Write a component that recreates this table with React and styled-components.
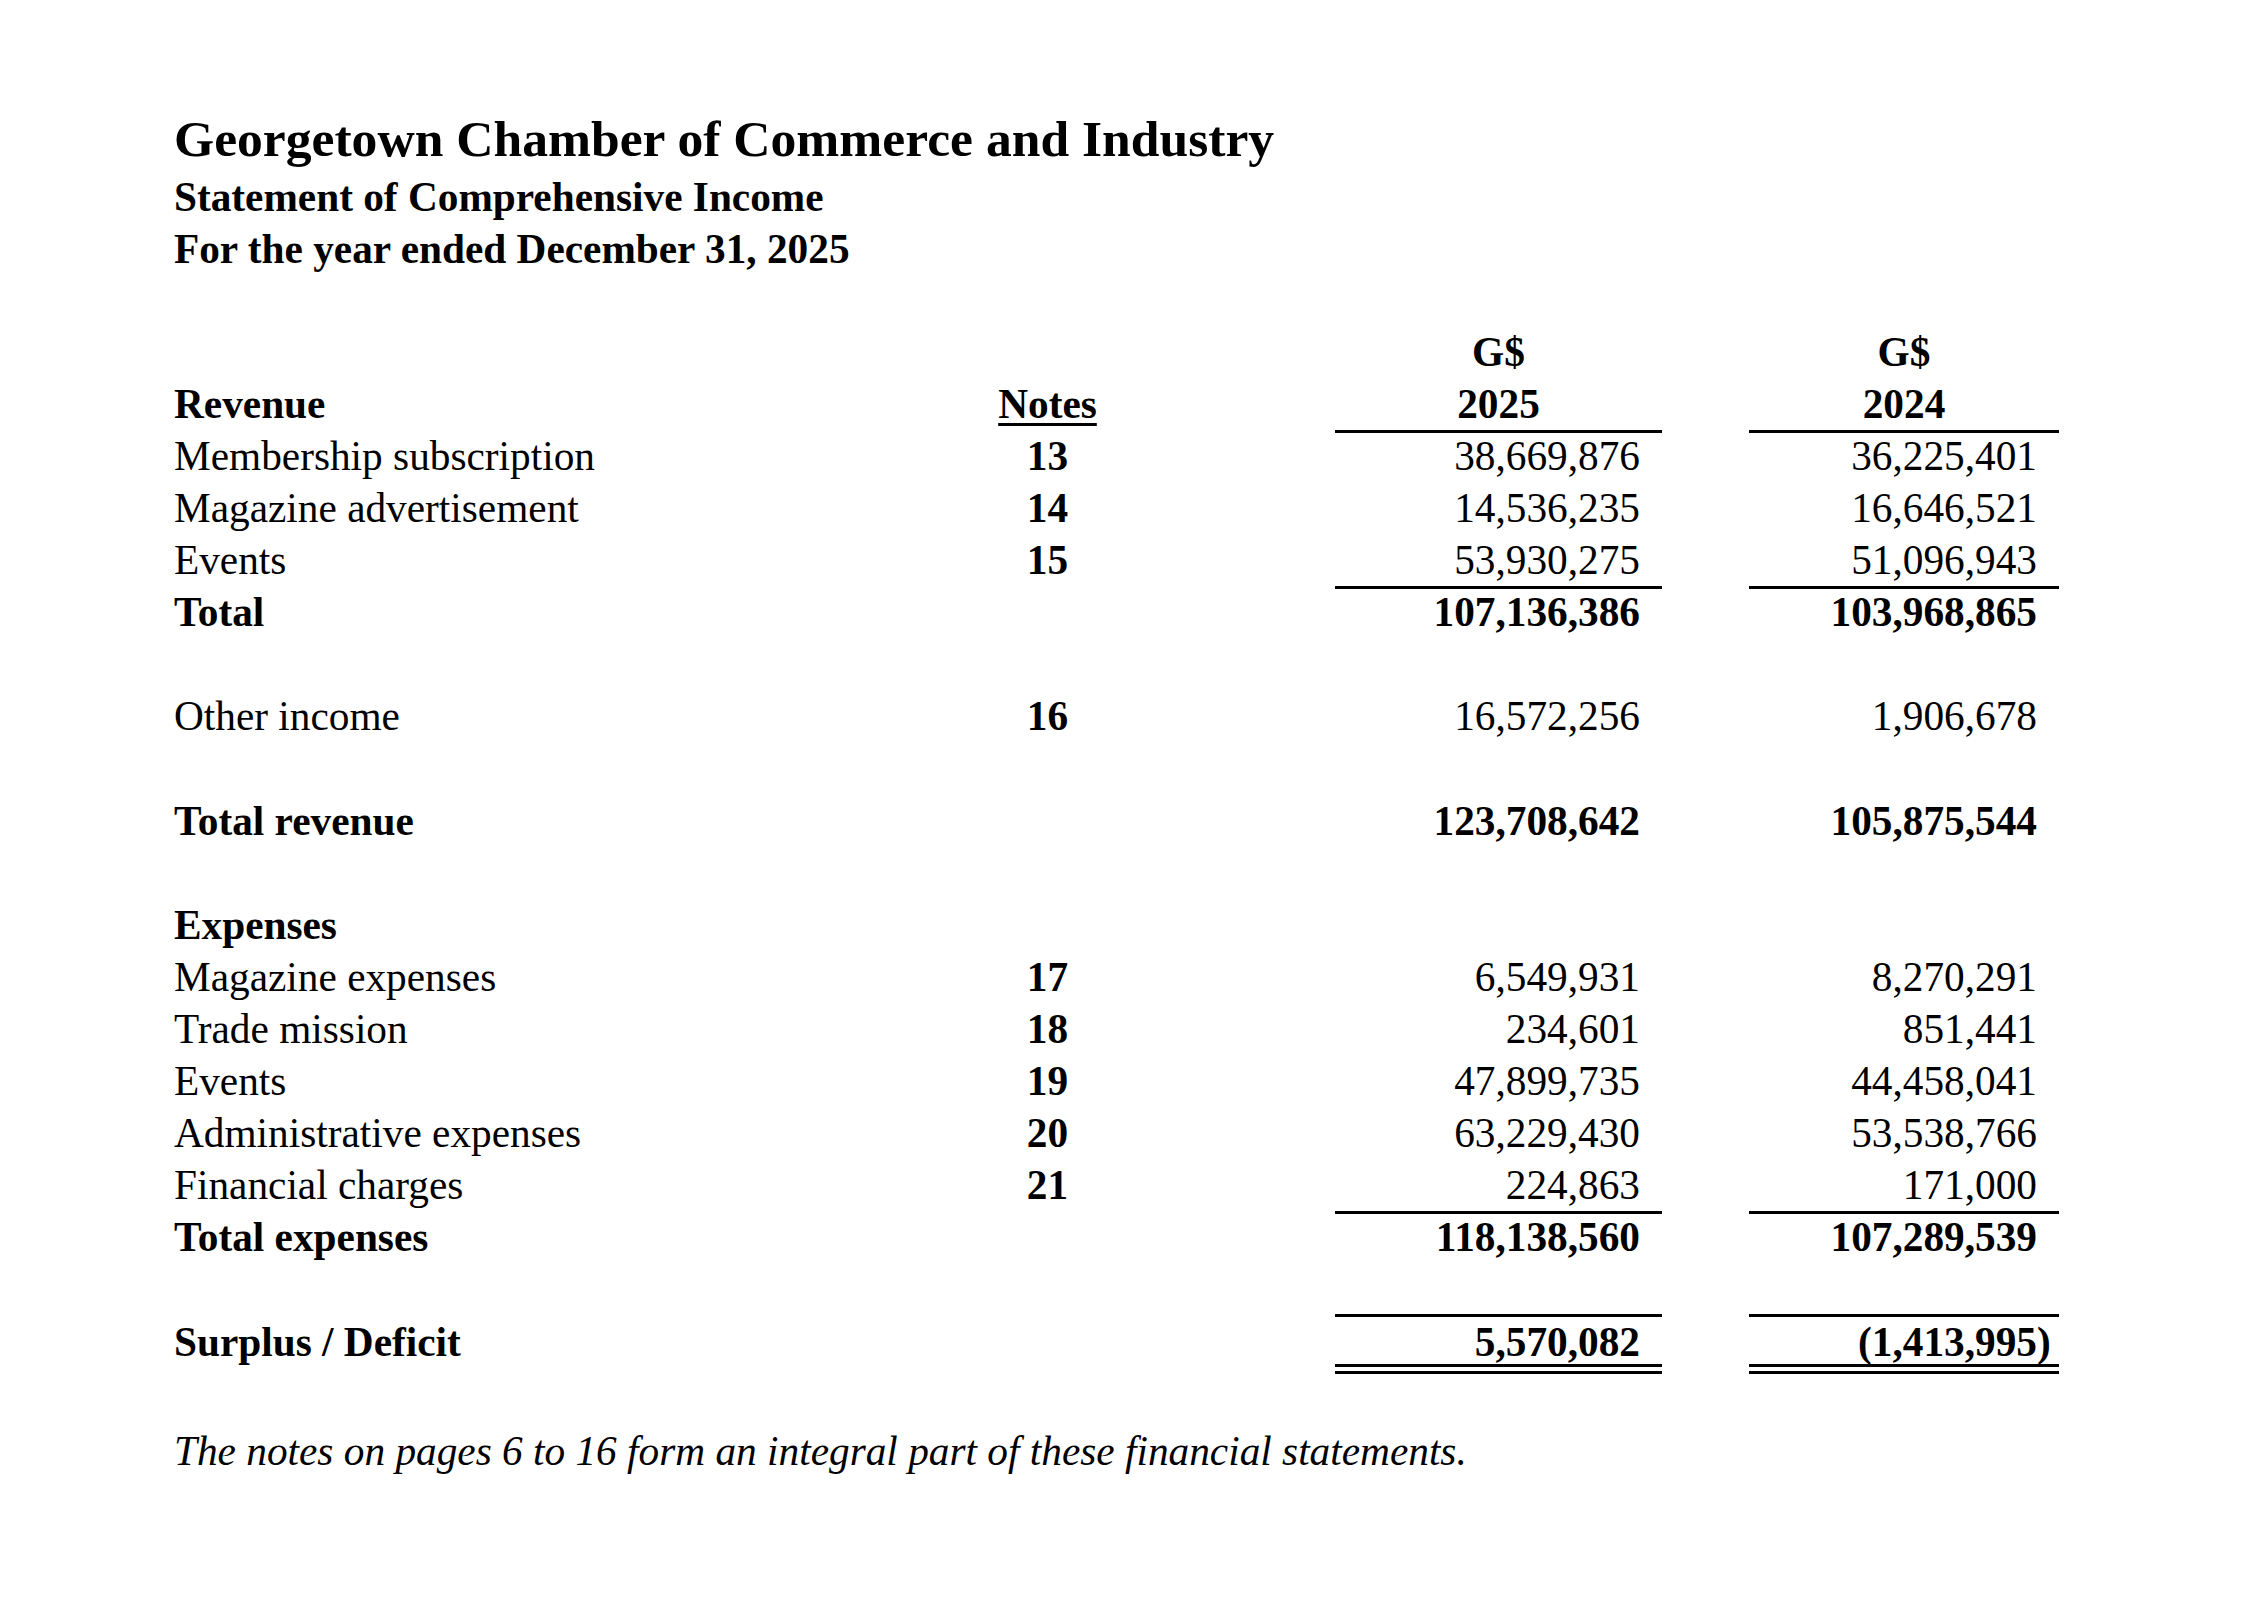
import React from "react";
import styled, { createGlobalStyle } from "styled-components";

const GlobalStyle = createGlobalStyle`
  html, body {
    margin: 0;
    padding: 0;
    background: #ffffff;
  }
  body {
    font-family: "Liberation Serif", "Times New Roman", serif;
    color: #000000;
  }
`;

const Page = styled.div`
  width: 2268px;
  min-height: 1610px;
  box-sizing: border-box;
  padding: 106.5px 0 0 174px;
  background: #ffffff;
`;

const Heading = styled.div`
  font-weight: bold;
  font-size: ${({ $main }) => ($main ? "51.6px" : "41.3px")};
  line-height: ${({ $main }) => ($main ? "64px" : "52px")};
  white-space: nowrap;
`;

const Table = styled.div`
  margin-top: 51.5px;
  width: 1885px;
  font-size: 41.3px;
`;

const Row = styled.div`
  display: grid;
  grid-template-columns: 806px 135px 220px 327px 87px 310px;
  grid-template-areas: "label note . cur . prior";
  height: 52.07px;
  line-height: 52.07px;
  white-space: nowrap;
`;

const SurplusRow = styled(Row)`
  margin-top: 50.5px;
  height: 60px;
  line-height: 42px;

  & > * {
    box-sizing: border-box;
    padding-top: 4px;
    border-top: 3px solid transparent;
  }
`;

const Label = styled.div`
  grid-area: label;
  font-weight: ${({ $bold }) => ($bold ? "bold" : "normal")};
`;

const Note = styled.div`
  grid-area: note;
  text-align: center;
  font-weight: bold;
`;

const NotesHead = styled.span`
  text-decoration: underline;
  text-decoration-thickness: 3px;
  text-underline-offset: 5px;
`;

const Amount = styled.div`
  grid-area: ${({ $prior }) => ($prior ? "prior" : "cur")};
  box-sizing: border-box;
  text-align: ${({ $center }) => ($center ? "center" : "right")};
  padding-right: ${({ $center }) => ($center ? "0" : "22px")};
  font-weight: ${({ $bold }) => ($bold ? "bold" : "normal")};
  border-bottom: ${({ $rule }) => ($rule ? "3px solid #000" : "none")};
`;

const SurplusAmount = styled(Amount)`
  && {
    border-top: 3px solid #000;
    border-bottom: 10px double #000;
  }
`;

const Paren = styled.span`
  margin-right: -0.333em;
`;

const Footnote = styled.p`
  margin: 51px 0 0;
  font-size: 41.3px;
  font-style: italic;
  line-height: 52px;
  white-space: nowrap;
`;

const revenue = [
  { label: "Membership subscription", note: "13", cur: "38,669,876", prior: "36,225,401" },
  { label: "Magazine advertisement", note: "14", cur: "14,536,235", prior: "16,646,521" },
  { label: "Events", note: "15", cur: "53,930,275", prior: "51,096,943", rule: true },
];

const expenses = [
  { label: "Magazine expenses", note: "17", cur: "6,549,931", prior: "8,270,291" },
  { label: "Trade mission", note: "18", cur: "234,601", prior: "851,441" },
  { label: "Events", note: "19", cur: "47,899,735", prior: "44,458,041" },
  { label: "Administrative expenses", note: "20", cur: "63,229,430", prior: "53,538,766" },
  { label: "Financial charges", note: "21", cur: "224,863", prior: "171,000", rule: true },
];

const LineItem = ({ item }) => (
  <Row>
    <Label>{item.label}</Label>
    <Note>{item.note}</Note>
    <Amount $rule={item.rule}>{item.cur}</Amount>
    <Amount $prior $rule={item.rule}>{item.prior}</Amount>
  </Row>
);

const TotalRow = ({ label, cur, prior }) => (
  <Row>
    <Label $bold>{label}</Label>
    <Amount $bold>{cur}</Amount>
    <Amount $prior $bold>{prior}</Amount>
  </Row>
);

const App = () => {
  return (
    <Page>
      <GlobalStyle />
      <Heading $main>Georgetown Chamber of Commerce and Industry</Heading>
      <Heading>Statement of Comprehensive Income</Heading>
      <Heading>For the year ended December 31, 2025</Heading>

      <Table>
        <Row>
          <Amount $center $bold>G$</Amount>
          <Amount $prior $center $bold>G$</Amount>
        </Row>
        <Row>
          <Label $bold>Revenue</Label>
          <Note>
            <NotesHead>Notes</NotesHead>
          </Note>
          <Amount $center $bold $rule>2025</Amount>
          <Amount $prior $center $bold $rule>2024</Amount>
        </Row>
        {revenue.map((item, i) => (
          <LineItem key={"r" + i} item={item} />
        ))}
        <TotalRow label="Total" cur="107,136,386" prior="103,968,865" />
        <Row />
        <LineItem item={{ label: "Other income", note: "16", cur: "16,572,256", prior: "1,906,678" }} />
        <Row />
        <TotalRow label="Total revenue" cur="123,708,642" prior="105,875,544" />
        <Row />
        <Row>
          <Label $bold>Expenses</Label>
        </Row>
        {expenses.map((item, i) => (
          <LineItem key={"e" + i} item={item} />
        ))}
        <TotalRow label="Total expenses" cur="118,138,560" prior="107,289,539" />
        <SurplusRow>
          <Label $bold>Surplus / Deficit</Label>
          <SurplusAmount $bold>5,570,082</SurplusAmount>
          <SurplusAmount $prior $bold>
            (1,413,995<Paren>)</Paren>
          </SurplusAmount>
        </SurplusRow>
      </Table>

      <Footnote>The notes on pages 6 to 16 form an integral part of these financial statements.</Footnote>
    </Page>
  );
};

export default App;
